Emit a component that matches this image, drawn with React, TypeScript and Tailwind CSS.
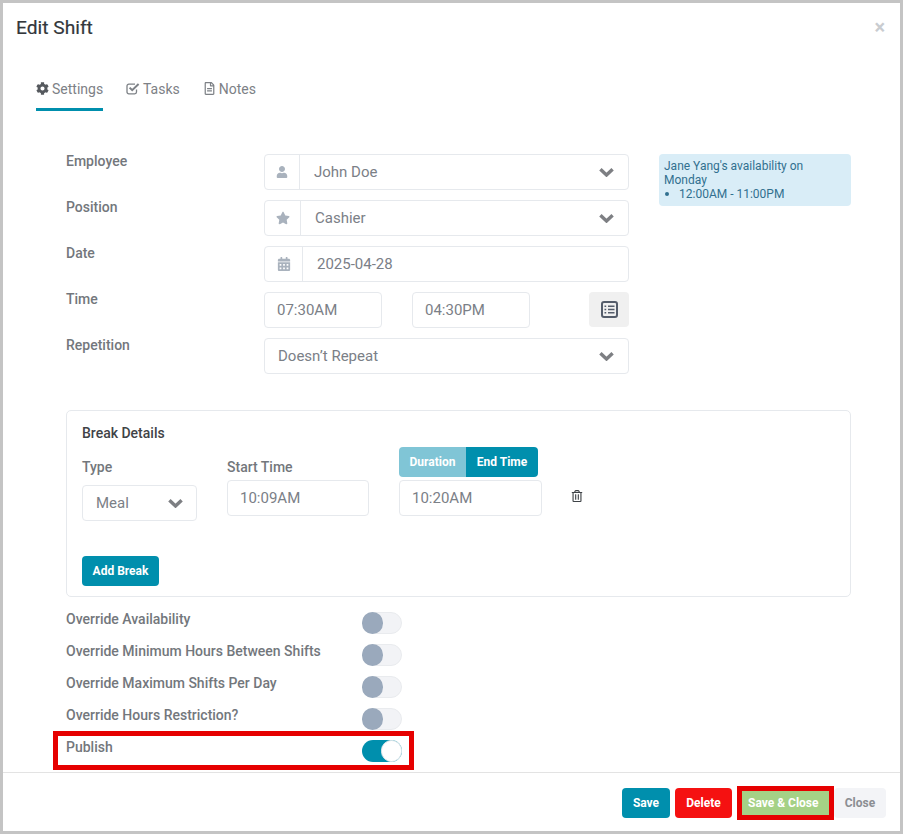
import React from "react";
import { FaCog, FaRegFileAlt, FaUser, FaStar, FaCalendarAlt, FaRegTrashAlt } from "react-icons/fa";

const field = "h-9 rounded-[4px] border border-[#e6e9ed] bg-white flex items-center text-[15px] text-[#7b8087]";

function Chevron({ className = "" }: { className?: string }) {
  return (
    <svg viewBox="0 0 15 10" className={`w-[15px] h-[10px] shrink-0 ${className}`} fill="none" stroke="#7d7f83" strokeWidth="3.4">
      <path d="M1.4 2.2 L7.5 8 L13.6 2.2" />
    </svg>
  );
}

function CheckSquare() {
  return (
    <svg viewBox="0 0 14 13" className="w-[14px] h-[13px] mt-[3px] shrink-0" fill="none" stroke="currentColor">
      <path d="M10.5 7.5 V10 a1.8 1.8 0 0 1 -1.8 1.8 H2.8 A1.8 1.8 0 0 1 1 10 V4 A1.8 1.8 0 0 1 2.8 2.2 H9" strokeWidth="1.3" />
      <path d="M3.6 5.6 L6.2 8.2 L12.6 2" strokeWidth="2" />
    </svg>
  );
}

function ListIcon() {
  return (
    <svg viewBox="0 0 17 17" className="w-[17px] h-[17px]" fill="none" stroke="#555d6b">
      <rect x="1" y="1" width="15" height="15" rx="2" strokeWidth="2" />
      <path d="M7 5.3 H13.5 M7 8.5 H13.5 M7 11.7 H13.5 M3.5 5.3 H5.2 M3.5 8.5 H5.2 M3.5 11.7 H5.2" strokeWidth="1.5" />
    </svg>
  );
}

function Row({ label, children }: { label: string; children: React.ReactNode }) {
  return (
    <div className="flex h-9">
      <div className="w-[198px] text-[14px] font-medium text-[#73777c] leading-[14px]">{label}</div>
      <div className="w-[365px]">{children}</div>
    </div>
  );
}

function IconSelect({ icon, width, text, chevron }: { icon: React.ReactNode; width: string; text: string; chevron?: boolean }) {
  return (
    <div className={field}>
      <div className={`${width} h-full flex items-center justify-center border-r border-[#e6e9ed] text-[#a9b2bd] text-[14px]`}>{icon}</div>
      <span className="flex-1 pl-[14px] pt-[1px]">{text}</span>
      {chevron && <Chevron className="mr-[14px]" />}
    </div>
  );
}

function Toggle({ label, on }: { label: string; on?: boolean }) {
  return (
    <div className="flex h-8">
      <div className="w-[296px] text-[14px] font-medium text-[#73777c] leading-[14px]">{label}</div>
      <div className={`w-10 h-[22px] rounded-full flex ${on ? "bg-[#008fad] justify-end" : "bg-[#f2f3f6] border border-[#e9ebee]"}`}>
        <div className={`w-[21px] h-[22px] rounded-full ${on ? "bg-white border border-[#e9ebee]" : "bg-[#9aa9bc] -ml-px -mt-px"}`} />
      </div>
    </div>
  );
}

export default function App() {
  return (
    <div className="w-[903px] h-[834px] border-[3px] border-[#c4c4c4] bg-white flex flex-col font-['Roboto',sans-serif] overflow-hidden">
      <div className="flex justify-between pl-[13px] pr-[15px] pt-[13px] h-[50px]">
        <h1 className="text-[19.2px] leading-6 font-normal text-[#33373b] [-webkit-text-stroke:0.2px_#33373b]">Edit Shift</h1>
        <span className="text-[#c9ccd0] text-[20px] leading-[22px] font-bold">×</span>
      </div>

      <div className="flex gap-[23px] pl-[33px] h-[58px] pt-[26px] text-[14px] text-[#7d8186]">
        <div className="h-[32px] border-b-[3px] border-[#008fad] flex items-start gap-[3px] w-[67px] whitespace-nowrap leading-5">
          <FaCog className="text-[#55595e] text-[13px] mt-[3px] shrink-0" /> Settings
        </div>
        <div className="flex items-start gap-[3px] leading-5"><CheckSquare /> Tasks</div>
        <div className="flex items-start gap-[3px] leading-5"><FaRegFileAlt className="text-[13px] mt-[3px]" /> Notes</div>
      </div>

      <div className="pl-[63px] pt-[43px] flex">
        <div className="flex flex-col gap-[10px] w-[563px]">
          <Row label="Employee"><IconSelect icon={<FaUser className="text-[12px]" />} width="w-[35px]" text="John Doe" chevron /></Row>
          <Row label="Position"><IconSelect icon={<FaStar />} width="w-[36px]" text="Cashier" chevron /></Row>
          <Row label="Date"><IconSelect icon={<FaCalendarAlt />} width="w-[38px]" text="2025-04-28" /></Row>
          <Row label="Time">
            <div className="flex justify-between">
              <div className="flex gap-[30px]">
                <div className={`${field} w-[118px] pl-3`}><span className="pt-[1px]">07:30AM</span></div>
                <div className={`${field} w-[118px] pl-3`}><span className="pt-[1px]">04:30PM</span></div>
              </div>
              <div className="w-10 h-[35px] rounded-[4px] bg-[#f0f0f0] flex items-center justify-center"><ListIcon /></div>
            </div>
          </Row>
          <Row label="Repetition">
            <div className={`${field} justify-between pl-[13px] pr-[14px]`}>
              <span className="pt-[1px]">Doesn’t Repeat</span>
              <Chevron />
            </div>
          </Row>
        </div>
        <div className="ml-[30px] w-[192px] h-[52px] rounded-[4px] bg-[#d9edf7] text-[#31708f] text-[12px] leading-[14px] pl-[5px] pt-[5px] pr-[30px]">
          <div>Jane Yang's availability on Monday</div>
          <div className="flex items-center whitespace-nowrap"><span className="w-1 h-1 rounded-full bg-[#31708f] ml-[1px] mr-[10px]" />12:00AM - 11:00PM</div>
        </div>
      </div>

      <div className="ml-[63px] mt-[36px] w-[785px] h-[187px] rounded-[5px] border border-[#e6e9ed] pl-[15px] pt-[14px]">
        <div className="text-[14px] font-medium text-[#3f4347] leading-4">Break Details</div>
        <div className="flex mt-[6px] h-[76px]">
          <div className="w-[145px] pt-[12px]">
            <div className="text-[14px] font-medium text-[#73777c] leading-4">Type</div>
            <div className={`${field} w-[115px] mt-[10px] pl-[13px] pr-[13px] justify-between`}>
              <span className="pt-[1px]">Meal</span><Chevron />
            </div>
          </div>
          <div className="w-[172px] pt-[12px]">
            <div className="text-[14px] font-medium text-[#73777c] leading-4">Start Time</div>
            <div className={`${field} w-[142px] mt-[5px] pl-3`}><span className="pt-[1px]">10:09AM</span></div>
          </div>
          <div>
            <div className="flex w-[139px] h-[30px] rounded-[4px] overflow-hidden text-[12px] font-bold text-white">
              <div className="w-[67px] bg-[#80c5d6] flex items-center justify-center">Duration</div>
              <div className="flex-1 bg-[#008fad] flex items-center justify-center">End Time</div>
            </div>
            <div className={`${field} w-[143px] mt-[3px] pl-3`}><span className="pt-[1px]">10:20AM</span></div>
          </div>
          <FaRegTrashAlt className="ml-[29px] mt-[43px] text-[#3f4347] text-[12px]" />
        </div>
        <button className="mt-[33px] w-[77px] h-[30px] rounded-[4px] bg-[#008fad] text-white text-[12px] font-bold">Add Break</button>
      </div>

      <div className="ml-[63px] mt-[15px]">
        <Toggle label="Override Availability" />
        <Toggle label="Override Minimum Hours Between Shifts" />
        <Toggle label="Override Maximum Shifts Per Day" />
        <Toggle label="Override Hours Restriction?" />
        <div className="relative">
          <Toggle label="Publish" on />
          <div className="absolute left-[-13px] top-[-9px] w-[361px] h-[39px] border-[5px] border-[#e60000] pointer-events-none" />
        </div>
      </div>

      <div className="mt-auto h-[59px] border-t border-[#e3e3e3] flex justify-end gap-[5px] pr-[14px] pt-[15px] text-[12px] font-bold">
        <button className="w-[48px] h-[30px] rounded-[4px] bg-[#008fad] text-white">Save</button>
        <button className="w-[57px] h-[30px] rounded-[4px] bg-[#f51111] text-white">Delete</button>
        <button className="w-[97px] h-[34px] -mt-[2px] border-[5px] border-[#e60000] bg-[#a5d186] text-white text-left pl-[6px]">Save &amp; Close</button>
        <button className="w-[52px] h-[30px] -ml-[5px] rounded-[4px] bg-[#f3f4f7] text-[#8b8e93]">Close</button>
      </div>
    </div>
  );
}
